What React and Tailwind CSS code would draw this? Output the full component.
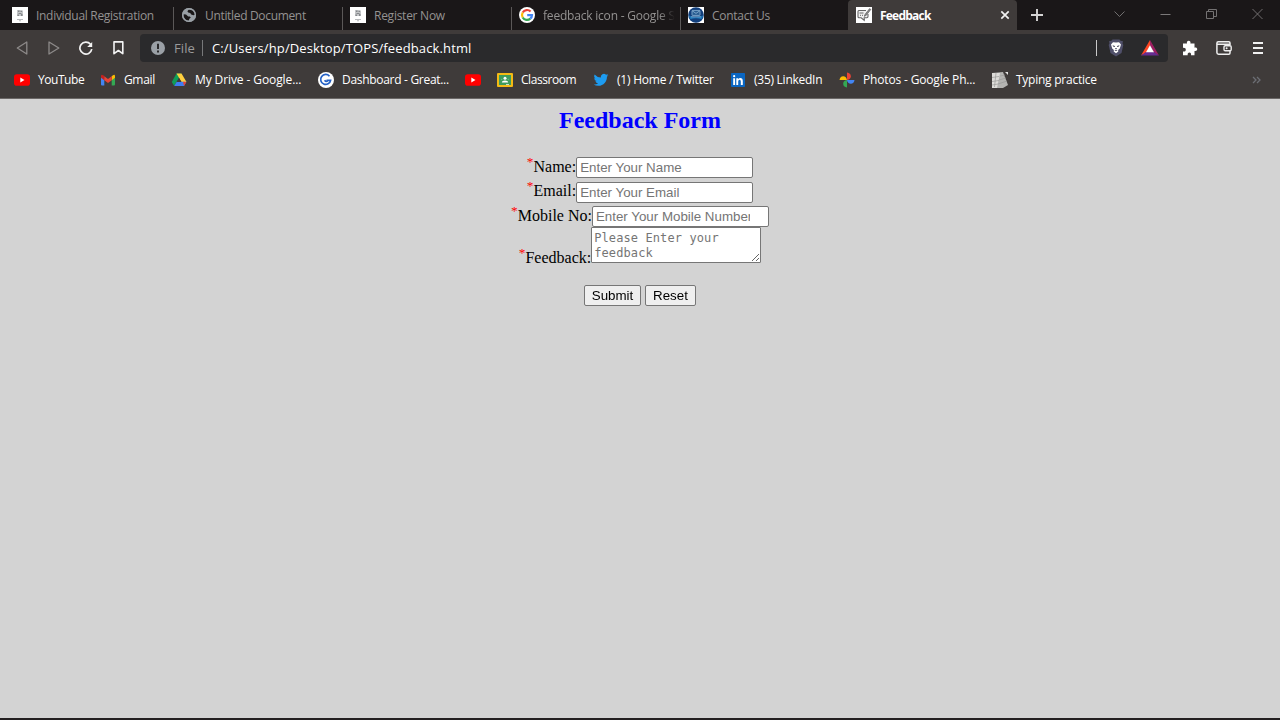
import React from "react";

const UI = "font-['Open_Sans','Noto_Sans',sans-serif]";

function DocIcon() {
  return (
    <svg className="size-4 shrink-0" viewBox="0 0 16 16">
      <rect width="16" height="16" fill="#fff" />
      <path d="M5 3h5l1 1v5H5z" fill="#c4c6c8" />
      <path d="M6 3.500h1.500v1.500H6zM8.500 4H10v1H8.500zM6.500 6h3v1h-3zM5.500 7.500H7V9H5.500zM9 7h1.500v2H9z" fill="#85888b" />
      <path d="M5 12h6v1H5zM7 13.300h2v.9H7z" fill="#b9bbbd" />
    </svg>
  );
}

function GlobeIcon() {
  return (
    <svg className="size-4 shrink-0" viewBox="0 0 16 16">
      <circle cx="8" cy="8" r="7" fill="#9aa0a6" />
      <path d="M2.400 7.200 5 7.600l2.200 1.800h1.600l1 1.200-1.400 1.200-.8 2.200-2.800-.8-2.400-3z" fill="#1a1718" />
      <path d="M7.800 2.400 6.400 4.200l.8 1.400 2 .4 1 1.600 2.200.6 1.800-.4-.4-2.400-2-2.400z" fill="#1a1718" />
      <circle cx="8" cy="8" r="6.300" fill="none" stroke="#9aa0a6" strokeWidth="1.500" />
    </svg>
  );
}

function GoogleIcon() {
  return (
    <svg className="size-4 shrink-0" viewBox="0 0 16 16">
      <circle cx="8" cy="8" r="8" fill="#fff" />
      <g fill="none" strokeWidth="2.200">
        <path d="M11.600 4.500A5 5 0 0 0 3.700 5.500" stroke="#ea4335" />
        <path d="M3.700 5.500A5 5 0 0 0 3.700 10.500" stroke="#fbbc05" />
        <path d="M3.700 10.500A5 5 0 0 0 11.300 11.700" stroke="#34a853" />
        <path d="M11.300 11.700A5 5 0 0 0 13 8.100H8.200" stroke="#4285f4" />
      </g>
    </svg>
  );
}

function ContactIcon() {
  return (
    <svg className="size-4 shrink-0" viewBox="0 0 16 16">
      <rect width="16" height="16" fill="#fff" />
      <circle cx="8" cy="8" r="7.800" fill="#123f7c" />
      <path d="M.8 8.500A7.300 7.300 0 0 0 15.200 8.500Q8 12 .8 8.500z" fill="#1f78b8" />
      <path d="M2.500 12.300Q8 10 13.500 12.300 11 15.300 8 15.300t-5.500-3z" fill="#123f7c" />
      <rect x="4" y="3.400" width="8" height="5" rx=".6" fill="#285c91" stroke="#8fb8d8" strokeWidth=".8" />
      <path d="m4.200 3.800 3.800 2.600 3.800-2.600M3 9.800h10" fill="none" stroke="#8fb8d8" strokeWidth=".8" />
    </svg>
  );
}

function FeedbackIcon() {
  return (
    <svg className="size-4 shrink-0" viewBox="0 0 16 16">
      <rect width="16" height="16" fill="#fff" />
      <path d="M10 3.500H2.800Q2 3.500 2 4.500v5.300q0 1 1 1h2.200l3 2.600v-2.600h2.600q1.200 0 1.200-1.200V7" fill="#f1f1f1" stroke="#666" strokeWidth="1.100" />
      <path d="m9 7.400 4.600-5.800 1.200.9-4.500 5.800-1.700.8z" fill="#888" stroke="#555" strokeWidth=".6" />
      <path d="M3.500 6h4M4 8.300h1M6 8.300h1M8 9h1" stroke="#666" strokeWidth="1" />
    </svg>
  );
}

const tabs = [
  { title: "Individual Registration", Icon: DocIcon, cls: "tracking-[-0.3px]" },
  { title: "Untitled Document", Icon: GlobeIcon, cls: "tracking-[-0.33px]" },
  { title: "Register Now", Icon: DocIcon, cls: "tracking-[-0.26px]" },
  { title: "feedback icon - Google Search", Icon: GoogleIcon, cls: "tracking-[-0.2px]" },
  { title: "Contact Us", Icon: ContactIcon, cls: "tracking-[-0.28px]" },
];

function TabStrip() {
  return (
    <div className="flex h-[30px] bg-[#1a1718] pl-1">
      {tabs.map(({ title, Icon, cls }, i) => (
        <div key={title} className="flex w-[169px] shrink-0 items-center">
          <div className={i ? "h-[23px] w-px shrink-0 self-end bg-[#5b5858]" : "w-px shrink-0"} />
          <div className="flex min-w-0 flex-1 items-center gap-2 overflow-hidden pl-[7px] pr-[5px]">
            <Icon />
            <span
              className={
                "min-w-0 flex-1 overflow-hidden whitespace-nowrap pt-px text-[12px] leading-4 text-[#949291] " +
                cls +
                (i === 3 ? " [mask-image:linear-gradient(to_right,black_88%,transparent)]" : "")
              }
            >
              {title}
            </span>
          </div>
        </div>
      ))}
      <div className="-ml-px flex w-[169px] shrink-0 items-center rounded-t-[4px] bg-[#3f3b3a] pl-2 pr-[7px]">
        <FeedbackIcon />
        <span className="ml-2 flex-1 pt-px text-[12px] font-bold leading-4 tracking-[-0.78px] text-white">Feedback</span>
        <svg className="size-[10px]" viewBox="0 0 10 10">
          <path d="m1.300 1.300 7.400 7.400m0-7.400L1.300 8.700" stroke="#f1f1f1" strokeWidth="1.700" />
        </svg>
      </div>
      <svg className="ml-[14px] size-3 self-center" viewBox="0 0 12 12">
        <path d="M6 0v12M0 6h12" stroke="#d5d4d4" strokeWidth="1.900" />
      </svg>
      <div className="ml-auto flex items-center gap-[35px] pb-[2px] pr-[17.500px]">
        <svg className="h-3 w-[11px]" viewBox="0 0 11 12">
          <path d="m.5 3.500 5 5 5-5" fill="none" stroke="#7b7979" strokeWidth=".9" />
        </svg>
        <svg className="h-3 w-[11px]" viewBox="0 0 11 12">
          <path d="M.5 6.500h10" stroke="#7b7979" />
        </svg>
        <svg className="h-3 w-[11px]" viewBox="0 0 11 12">
          <path d="M.5 3.500h7v7h-7zM2.500 3V1.500h8v7H8" fill="none" stroke="#747272" />
        </svg>
        <svg className="h-3 w-[11px]" viewBox="0 0 11 12">
          <path d="m.5 1 10 10m0-10-10 10" stroke="#7b7979" strokeWidth=".9" />
        </svg>
      </div>
    </div>
  );
}

function Toolbar() {
  return (
    <div className="flex h-9 items-center bg-[#3f3b3a]">
      <svg className="ml-4 h-[14px] w-3 shrink-0" viewBox="0 0 12 14">
        <path d="M10.800 1v12L1.300 7z" fill="none" stroke="#8d8a89" strokeWidth="1.300" strokeLinejoin="round" />
      </svg>
      <svg className="ml-[19px] size-[14px] shrink-0" viewBox="0 0 14 14">
        <path d="M2 1v12L11.800 7z" fill="none" stroke="#8d8a89" strokeWidth="1.300" strokeLinejoin="round" />
      </svg>
      <svg className="ml-[18px] size-[14px] shrink-0" viewBox="0 0 14 14">
        <path d="M11.500 3.200A6 6 0 1 0 12.800 8.200" fill="none" stroke="#f3f3f3" strokeWidth="1.700" />
        <path d="M13.200 1v5H8.200z" fill="#f3f3f3" />
      </svg>
      <svg className="ml-[20px] h-[14px] w-[11px] shrink-0" viewBox="0 0 11 14">
        <path d="M1 .9h8.800v11.800L5.400 9.500 1 12.700z" fill="none" stroke="#f3f3f3" strokeWidth="1.600" strokeLinejoin="round" />
      </svg>
      <div className="ml-4 flex h-7 w-[1028px] shrink-0 items-center rounded-[4px] bg-[#2a2a2c] pl-[11px] pr-[9px]">
        <svg className="size-[14px]" viewBox="0 0 14 14">
          <circle cx="7" cy="7" r="7" fill="#9aa0a6" />
          <path d="M7 2.700v5.200M7 9.400v2" stroke="#2a2a2c" strokeWidth="2" />
        </svg>
        <span className="ml-[9px] w-[28px] text-[13px] leading-4 tracking-[0.1px] text-[#9a9a9b]">File</span>
        <div className="h-4 w-px bg-[#77787a]" />
        <span className="ml-[9px] whitespace-nowrap text-[13px] leading-4 tracking-[0.125px] text-white">
          C:/Users/hp/Desktop/TOPS/feedback.html
        </span>
        <div className="ml-auto h-4 w-px bg-[#c8c8c9]" />
        <svg className="ml-[11px] h-[18px] w-4" viewBox="0 0 16 18">
          <path d="M4.500.5h7l1 1.200 2.500.6-.5 2 .8 1.600L13.500 14 8 17.500 2.500 14 .7 5.900l.8-1.600-.5-2 2.500-.6z" fill="#50506a" />
          <path d="M5 3.200l3 .3 3-.3L13 5.600l-1.200 3.900-1.700 1.500.2 1.600L8 14.200l-2.300-1.600.2-1.600-1.700-1.500L3 5.600z" fill="#fff" />
          <path d="M4.600 6.300 6.900 7v1.100L5.100 7.600zM11.400 6.300 9.100 7v1.100l1.800-.5zM7.200 9h1.600l-.3 1.200h-1zM6.300 11.700l1.700-.6 1.700.6-1.700.3z" fill="#3a3a50" />
        </svg>
        <svg className="ml-[17px] h-4 w-[18px]" viewBox="0 0 18 16">
          <path d="M9 0 0 15.500l9-5z" fill="#ff4724" />
          <path d="M9 0v5.500l4 7 5 3z" fill="#9e1f63" />
          <path d="M0 15.500 5 12h8l5 3.500z" fill="#662d91" />
          <path d="M9 5.200 5 12.300h8z" fill="#fff" />
        </svg>
      </div>
      <svg className="ml-[14px] size-4 shrink-0" viewBox="0 0 16 16">
        <path d="M5 3.500C4.500 1.900 5.400.8 6.700.8s2.200 1.100 1.700 2.700h4.100v4.200c1.500-.4 2.700.3 2.700 1.600s-1.200 2-2.700 1.600v4.300H9c.4-1.600-.4-2.600-1.600-2.600s-2 1-1.700 2.600H1v-3.700c1.700.3 2.800-.4 2.800-1.800S2.700 7.600 1 7.900V3.500z" fill="#fff" />
      </svg>
      <svg className="ml-[18px] h-[14px] w-4 shrink-0" viewBox="0 0 16 14">
        <path d="M14 4V2q0-1.200-1.200-1.200H2.300Q.9.800.9 2.200v9.300q0 1.700 1.700 1.700h10.200q1.200 0 1.200-1.200v-2M1 3.200h13" fill="none" stroke="#eee" strokeWidth="1.500" />
        <rect x="8" y="4.700" width="7.200" height="5" rx="1.200" fill="#3f3b3a" stroke="#eee" strokeWidth="1.400" />
        <circle cx="10.600" cy="7.200" r="1" fill="#eee" />
      </svg>
      <svg className="ml-[21px] h-3 w-[10px] shrink-0" viewBox="0 0 10 12">
        <path d="M0 1h10M0 6h10M0 11h10" stroke="#f0f0f0" strokeWidth="1.800" />
      </svg>
    </div>
  );
}

function YouTubeIcon() {
  return (
    <svg className="size-4 shrink-0" viewBox="0 0 16 16">
      <rect y="2.300" width="16" height="11.400" rx="2.800" fill="#f00" />
      <path d="M6.300 5.600v4.800L10.500 8z" fill="#fff" />
    </svg>
  );
}
function GmailIcon() {
  return (
    <svg className="size-4 shrink-0" viewBox="0 0 16 16">
      <path d="M1 4v8.500q0 1 1 1h2.300V6.700z" fill="#4285f4" />
      <path d="M15 4v8.500q0 1-1 1h-2.300V6.700z" fill="#34a853" />
      <path d="M11.700 4.200 13 3.200q2-1 2 1v1.500l-3.300 2.600z" fill="#fbbc04" />
      <path d="M4.300 4.200 3 3.200q-2-1-2 1v1.500l3.300 2.600z" fill="#c5221f" />
      <path d="M4.300 4.200 8 7l3.700-2.800v4.100L8 11 4.300 8.300z" fill="#ea4335" />
    </svg>
  );
}
function DriveIcon() {
  return (
    <svg className="size-4 shrink-0" viewBox="0 0 16 16">
      <path d="M5.500 1.500h5L8 6 3.200 14 .8 10z" fill="#0f9d58" />
      <path d="M5.500 1.500h5l5 8.500h-5z" fill="#ffcf3f" />
      <path d="M5.700 9.800h9.700L13 14H3.200z" fill="#3f7df1" />
      <path d="M8 5.800 5.600 9.900h4.800z" fill="#3f3b3a" />
      <path d="m12 9.800 3.400.1L13 14z" fill="#ea4335" />
    </svg>
  );
}
function GreatIcon() {
  return (
    <svg className="size-4 shrink-0" viewBox="0 0 16 16">
      <circle cx="8" cy="8" r="8" fill="#fff" />
      <path d="M11.500 4.200A5 5 0 1 0 12.600 8.300H8.500M6.600 8.200q1.200 2 3.200.5" fill="none" stroke="#2360c5" strokeWidth="1.700" />
    </svg>
  );
}
function ClassroomIcon() {
  return (
    <svg className="size-4 shrink-0" viewBox="0 0 16 16">
      <rect y="1" width="16" height="14" rx="1" fill="#f5ba14" />
      <rect x="2" y="3" width="12" height="10" fill="#3f9b5c" />
      <circle cx="8" cy="6.200" r="1.500" fill="#fff" />
      <path d="M4.800 10.500Q5 8.500 8 8.500t3.200 2z" fill="#fff" />
      <circle cx="4.700" cy="7.500" r=".7" fill="#6fb587" />
      <circle cx="11.300" cy="7.500" r=".7" fill="#6fb587" />
      <path d="M9 12.200h3v.8H9z" fill="#e8f2eb" />
    </svg>
  );
}
function TwitterIcon() {
  return (
    <svg className="size-4 shrink-0" viewBox="0 0 24 24">
      <path fill="#1d9bf0" d="M23 4.900a9 9 0 0 1-2.600.7 4.500 4.500 0 0 0 2-2.500 9 9 0 0 1-2.900 1.100 4.500 4.500 0 0 0-7.700 4.100A12.900 12.900 0 0 1 2.500 3.600a4.500 4.500 0 0 0 1.400 6 4.500 4.500 0 0 1-2-.5v.1a4.500 4.500 0 0 0 3.600 4.400 4.600 4.600 0 0 1-2 .1 4.500 4.500 0 0 0 4.200 3.100A9.100 9.100 0 0 1 1 18.700a12.800 12.800 0 0 0 7 2c8.300 0 12.900-6.900 12.900-12.900v-.6A9.200 9.200 0 0 0 23 4.900z" />
    </svg>
  );
}
function LinkedInIcon() {
  return (
    <svg className="size-4 shrink-0" viewBox="0 0 16 16">
      <rect x="1" y="1" width="14" height="14" rx=".8" fill="#0a66c2" />
      <path d="M3.200 6.300h1.900V13H3.200zM6.300 6.300h1.900v.9q.7-1.100 2.100-1.100 2.500 0 2.500 3V13h-2V9.500q0-1.700-1.200-1.700-1.400 0-1.400 1.700V13H6.300z" fill="#fff" />
      <circle cx="4.150" cy="4.200" r="1.100" fill="#fff" />
    </svg>
  );
}
function PhotosIcon() {
  return (
    <svg className="size-4 shrink-0" viewBox="0 0 16 16">
      <path d="M8 .5q3.800.5 3.800 3.700T8 8z" fill="#ea4335" />
      <path d="M15.500 8q-.5 3.800-3.700 3.800T8 8z" fill="#4285f4" />
      <path d="M8 15.500q-3.800-.5-3.800-3.700T8 8z" fill="#34a853" />
      <path d="M.5 8q.5-3.800 3.700-3.800T8 8z" fill="#fbbc04" />
    </svg>
  );
}
function TypingIcon() {
  return (
    <svg className="size-4 shrink-0" viewBox="0 0 16 16">
      <path d="M0 1 11 0l5 13-5 3H0z" fill="#b4b4b2" />
      <path d="M0 1h8L5 16H0z" fill="#dddcd9" />
      <path d="M0 5.500l7-1M0 9.500l7-1M0 13l6-1M4 1 2.500 15M8 4l5-1M7 8l7-2M6 12l9-3" stroke="#9a9a98" strokeWidth=".7" />
      <path d="M13 0h3v3z" fill="#e4e4e2" />
    </svg>
  );
}

const bookmarks = [
  { label: "YouTube", Icon: YouTubeIcon, cls: "w-[46px] tracking-[-0.45px]" },
  { label: "Gmail", Icon: GmailIcon, cls: "w-[31px] tracking-[-0.35px]" },
  { label: "My Drive - Google...", Icon: DriveIcon, cls: "w-[107px] tracking-[-0.1px]" },
  { label: "Dashboard - Great...", Icon: GreatIcon, cls: "w-[107px] tracking-[-0.3px]" },
  { label: "", Icon: YouTubeIcon, cls: "" },
  { label: "Classroom", Icon: ClassroomIcon, cls: "w-[56px] tracking-[-0.45px]" },
  { label: "(1) Home / Twitter", Icon: TwitterIcon, cls: "w-[97px] tracking-[-0.22px]" },
  { label: "(35) LinkedIn", Icon: LinkedInIcon, cls: "w-[69px] tracking-[-0.26px]" },
  { label: "Photos - Google Ph...", Icon: PhotosIcon, cls: "w-[113px] tracking-[-0.16px]" },
  { label: "Typing practice", Icon: TypingIcon, cls: "w-[82px] tracking-[-0.25px]" },
];

function Bookmarks() {
  return (
    <div className="flex h-[33px] items-center gap-4 border-b border-[#6b6867] bg-[#3f3b3a] pb-1 pl-[14px] pr-[19px]">
      {bookmarks.map(({ label, Icon, cls }, i) => (
        <div key={i} className="flex shrink-0 items-center gap-2">
          <Icon />
          {label && <span className={"whitespace-nowrap text-[12px] leading-4 text-white " + cls}>{label}</span>}
        </div>
      ))}
      <svg className="ml-auto h-2 w-[9px]" viewBox="0 0 9 8">
        <path d="m1 1 3 3-3 3m4-6 3 3-3 3" fill="none" stroke="#6c6e74" strokeWidth="1.300" />
      </svg>
    </div>
  );
}

function Label({ children, className }) {
  return (
    <label className={"flex whitespace-nowrap text-[16px] leading-[18px] " + className}>
      <sup className="top-0 -mt-[5px] w-[6.670px] text-[13.333px] leading-[18px] text-[#f00]">*</sup>
      {children}
    </label>
  );
}

const field =
  "block h-[21px] w-[177px] rounded-[2px] border border-[#767676] bg-white py-0 pl-[3px] font-['Liberation_Sans',sans-serif] text-[13.333px] text-black outline-none placeholder:text-[#757575]";
const button =
  "h-[21px] rounded-[2px] border border-[#767676] bg-[#efefef] text-center font-['Liberation_Sans',sans-serif] text-[13.333px] leading-[19px] text-black";

function FeedbackForm() {
  return (
    <main className="flex flex-1 flex-col items-center bg-[#d3d3d3] pt-[7px] font-['Liberation_Serif',serif] text-black">
      <h2 className="h-[51px] text-[24px] font-bold leading-7 text-[#00f]">Feedback Form</h2>
      <form className="flex flex-col items-center" onSubmit={(e) => e.preventDefault()}>
        <div className="flex h-[25px] items-start">
          <Label className="mt-px">Name:</Label>
          <input className={field} placeholder="Enter Your Name" />
        </div>
        <div className="flex h-6 items-start">
          <Label className="">Email:</Label>
          <input className={field} placeholder="Enter Your Email" />
        </div>
        <div className="flex h-[21px] items-start">
          <Label className="mt-px">Mobile No:</Label>
          <input className={field + " pr-[18px]"} placeholder="Enter Your Mobile Number" />
        </div>
        <div className="flex h-[36px] items-start">
          <Label className="mt-[22px]">Feedback:</Label>
          <textarea
            className="block h-9 w-[170px] rounded-[1px] border border-[#767676] bg-white px-[2px] py-[3px] font-['DejaVu_Sans_Mono',monospace] text-[12px] leading-[15px] tracking-[0.1px] outline-none placeholder:text-[#757575]"
            placeholder="Please Enter your feedback"
          />
        </div>
        <div className="mt-[22px] flex gap-1">
          <button type="submit" className={button + " w-[57px]"}>Submit</button>
          <button type="reset" className={button + " w-[51px]"}>Reset</button>
        </div>
      </form>
    </main>
  );
}

export default function App() {
  return (
    <div className="flex h-[720px] w-[1280px] flex-col overflow-hidden border-b-2 border-[#231f20] bg-[#d3d3d3]">
      <header className={UI}>
        <TabStrip />
        <Toolbar />
        <Bookmarks />
      </header>
      <FeedbackForm />
    </div>
  );
}
